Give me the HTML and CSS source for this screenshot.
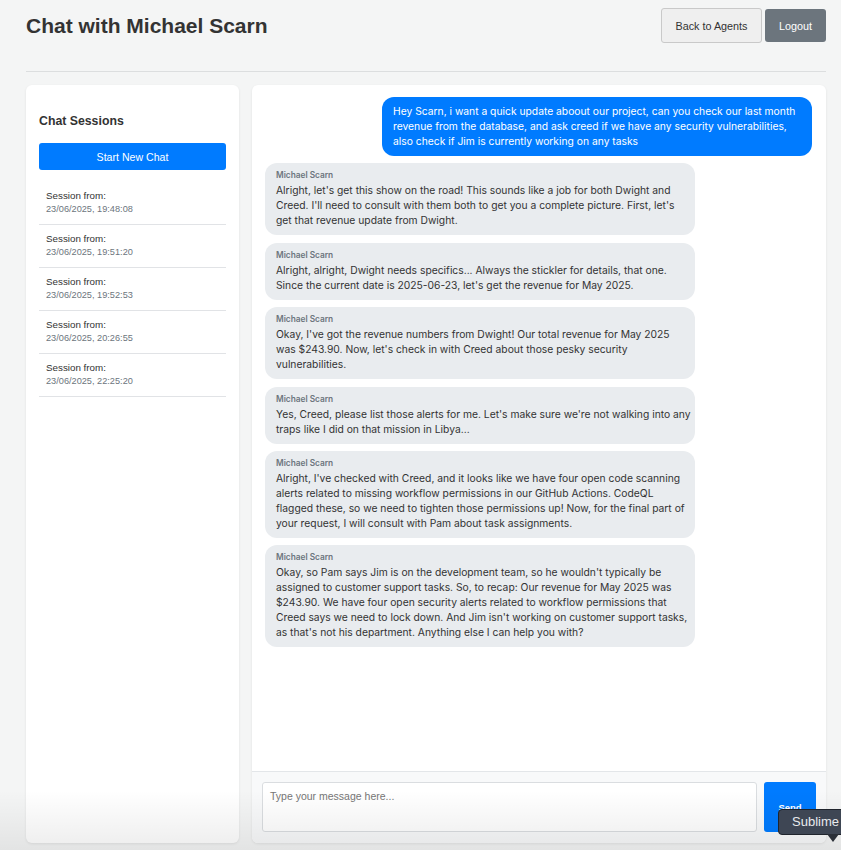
FILE: index.html
```html
<!DOCTYPE html>
<html lang="en">
<head>
<meta charset="utf-8">
<title>Chat with Michael Scarn</title>
<link rel="stylesheet" href="styles.css">
</head>
<body>
<div class="page">
  <header class="header">
    <h1 class="title">Chat with Michael Scarn</h1>
    <div class="header-actions">
      <button class="btn btn-light">Back to Agents</button>
      <button class="btn btn-dark">Logout</button>
    </div>
  </header>
  <hr class="divider">
  <main class="layout">
    <aside class="sidebar">
      <h3 class="sidebar-title">Chat Sessions</h3>
      <button class="btn-new">Start New Chat</button>
      <ul class="sessions">
        <li class="session"><div class="session-label">Session from:</div><div class="session-date">23/06/2025, 19:48:08</div></li>
        <li class="session"><div class="session-label">Session from:</div><div class="session-date">23/06/2025, 19:51:20</div></li>
        <li class="session"><div class="session-label">Session from:</div><div class="session-date">23/06/2025, 19:52:53</div></li>
        <li class="session"><div class="session-label">Session from:</div><div class="session-date">23/06/2025, 20:26:55</div></li>
        <li class="session"><div class="session-label">Session from:</div><div class="session-date">23/06/2025, 22:25:20</div></li>
      </ul>
    </aside>
    <section class="chat">
      <div class="messages">
        <div class="msg msg-user">Hey Scarn, i want a quick update aboout our project, can you check our last month revenue from the database, and ask creed if we have any security vulnerabilities, also check if Jim is currently working on any tasks</div>
        <div class="msg msg-bot"><div class="sender">Michael Scarn</div><div class="msg-text">Alright, let's get this show on the road! This sounds like a job for both Dwight and Creed. I'll need to consult with them both to get you a complete picture. First, let's get that revenue update from Dwight.</div></div>
        <div class="msg msg-bot"><div class="sender">Michael Scarn</div><div class="msg-text">Alright, alright, Dwight needs specifics... Always the stickler for details, that one. Since the current date is 2025-06-23, let's get the revenue for May 2025.</div></div>
        <div class="msg msg-bot"><div class="sender">Michael Scarn</div><div class="msg-text">Okay, I've got the revenue numbers from Dwight! Our total revenue for May 2025<br>was $243.90. Now, let's check in with Creed about those pesky security vulnerabilities.</div></div>
        <div class="msg msg-bot"><div class="sender">Michael Scarn</div><div class="msg-text">Yes, Creed, please list those alerts for me. Let's make sure we're not walking into any traps like I did on that mission in Libya...</div></div>
        <div class="msg msg-bot"><div class="sender">Michael Scarn</div><div class="msg-text">Alright, I've checked with Creed, and it looks like we have four open code scanning alerts related to missing workflow permissions in our GitHub Actions. CodeQL flagged these, so we need to tighten those permissions up! Now, for the final part of your request, I will consult with Pam about task assignments.</div></div>
        <div class="msg msg-bot"><div class="sender">Michael Scarn</div><div class="msg-text">Okay, so Pam says Jim is on the development team, so he wouldn't typically be assigned to customer support tasks. So, to recap: Our revenue for May 2025 was $243.90. We have four open security alerts related to workflow permissions that Creed says we need to lock down. And Jim isn't working on customer support tasks, as that's not his department. Anything else I can help you with?</div></div>
      </div>
      <form class="composer">
        <textarea class="input" placeholder="Type your message here..."></textarea>
        <button type="button" class="btn-send">Send</button>
      </form>
    </section>
  </main>
</div>
<div class="bottom-fade"></div>
<div class="tooltip">Sublime</div>
</body>
</html>
```

FILE: styles.css
```css
* { box-sizing: border-box; }

html, body {
  margin: 0;
  padding: 0;
}

body {
  background: #f4f5f5;
  font-family: "Liberation Sans", Arial, Helvetica, sans-serif;
  color: #333;
  height: 850px;
  overflow: hidden;
  position: relative;
}

.page {
  width: 800px;
  margin-left: 26px;
  padding-top: 8px;
}

.header {
  display: flex;
  justify-content: space-between;
  align-items: center;
  height: 35px;
}

.title {
  margin: 0;
  font-size: 21px;
  line-height: 25px;
  font-weight: bold;
  color: #333;
}

.header-actions {
  display: flex;
  align-items: center;
  gap: 3px;
}

.btn {
  font-family: "Liberation Sans", Arial, sans-serif;
  font-size: 10.8px;
  border-radius: 3px;
  cursor: pointer;
}

.btn-light {
  height: 35px;
  width: 101px;
  background: #efefef;
  border: 1px solid #c9c9c9;
  color: #333;
}

.btn-dark {
  height: 33px;
  width: 61px;
  background: #6c757d;
  border: none;
  color: #fff;
}

.divider {
  border: none;
  border-top: 1px solid #dcdedf;
  margin: 28px 0 13px;
  height: 0;
}

.layout {
  display: flex;
  gap: 13px;
  height: 758px;
}

.sidebar {
  width: 213px;
  background: #fff;
  border-radius: 6px;
  box-shadow: 0 1px 3px rgba(0,0,0,0.08);
  padding: 13px;
}

.sidebar-title {
  margin: 16px 0 14px;
  font-size: 12.3px;
  line-height: 15px;
  font-weight: bold;
  color: #333;
}

.btn-new {
  display: block;
  width: 100%;
  height: 27px;
  background: #007bff;
  color: #fff;
  border: none;
  border-radius: 3px;
  font-family: "Liberation Sans", Arial, sans-serif;
  font-size: 10.6px;
  margin-bottom: 12px;
}

.sessions {
  list-style: none;
  margin: 0;
  padding: 0;
}

.session {
  padding: 7px 7px 8px;
  border-bottom: 1px solid #e1e3e6;
}

.session-label {
  font-size: 9.8px;
  line-height: 13px;
  color: #333;
}

.session-date {
  font-size: 9.2px;
  line-height: 14px;
  color: #6c757d;
}

.chat {
  flex: 1;
  background: #fff;
  border-radius: 6px;
  box-shadow: 0 1px 3px rgba(0,0,0,0.08);
  display: flex;
  flex-direction: column;
  overflow: hidden;
}

.messages {
  flex: 1;
  padding: 12px 14px 12px 13px;
  display: flex;
  flex-direction: column;
  gap: 7.4px;
  overflow: hidden;
}

.msg {
  max-width: 430px;
  border-radius: 12px;
  font-family: Inter, "Liberation Sans", Arial, sans-serif;
  font-size: 10.3px;
  line-height: 15px;
}

.msg-user {
  align-self: flex-end;
  background: #007bff;
  color: #fff;
  padding: 7px 11px;
}

.msg-bot {
  align-self: flex-start;
  background: #e9ecef;
  color: #333;
  padding: 6px 3px 7px 11px;
}

.sender {
  font-size: 8.3px;
  line-height: 12px;
  font-weight: 600;
  color: #6c757d;
  margin-bottom: 2px;
}

.composer {
  margin: 0;
  height: 72px;
  border-top: 1px solid #e3e6e9;
  background: #f8f9fa;
  padding: 10px;
  display: flex;
  gap: 7px;
}

.input {
  flex: 1;
  height: 50px;
  border: 1px solid #dadde0;
  border-radius: 3px;
  background: #fff;
  padding: 7px 7px;
  font-family: "Liberation Sans", Arial, sans-serif;
  font-size: 10.5px;
  resize: none;
}

.input::placeholder {
  color: #767676;
}

.btn-send {
  width: 52px;
  height: 50px;
  background: #007bff;
  color: #fff;
  border: none;
  border-radius: 3px;
  font-family: "Liberation Sans", Arial, sans-serif;
  font-size: 9.5px;
  font-weight: bold;
}

.bottom-fade {
  position: absolute;
  left: 0;
  right: 0;
  bottom: 0;
  height: 60px;
  background: linear-gradient(to bottom, rgba(0,0,0,0), rgba(0,0,0,0.07));
  pointer-events: none;
}

.tooltip {
  position: absolute;
  left: 778px;
  top: 809px;
  width: 80px;
  height: 26px;
  background: #3e4654;
  border: 1px solid #1f242c;
  border-radius: 4px;
  color: #e8eaee;
  font-family: "Liberation Sans", Arial, sans-serif;
  font-size: 13px;
  line-height: 24px;
  padding-left: 13px;
}

.tooltip::after {
  content: "";
  position: absolute;
  left: 48px;
  bottom: -8px;
  border-left: 6px solid transparent;
  border-right: 6px solid transparent;
  border-top: 8px solid #2a2f38;
}
```
